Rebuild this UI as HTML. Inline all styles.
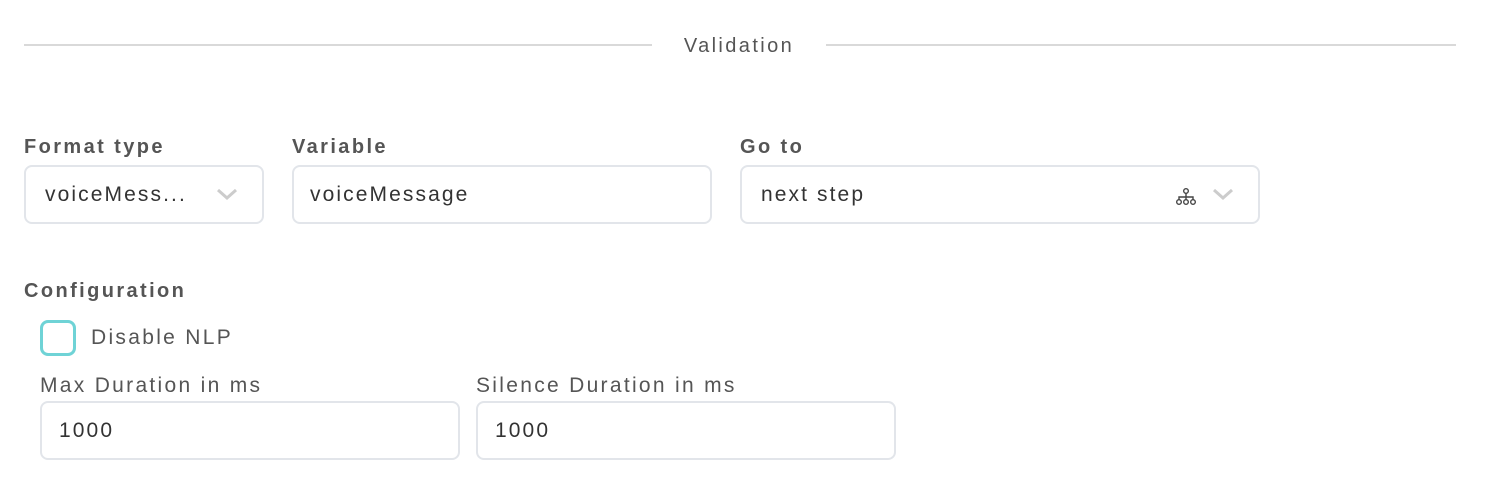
<!DOCTYPE html>
<html><head><style>
body{margin:0;width:1494px;height:502px;background:#fff;font-family:"Liberation Sans",sans-serif;position:relative;overflow:hidden}
.a{position:absolute}
.line{position:absolute;height:2px;background:#d9d9d9;top:44px}
.lbl{position:absolute;font-size:20px;font-weight:bold;color:#555;line-height:24px;letter-spacing:2.4px}
.lbl2{position:absolute;font-size:21px;color:#555;line-height:24px;letter-spacing:2.3px}
.box{position:absolute;border:2px solid #e2e5ea;border-radius:8px;box-sizing:border-box;height:59px;font-size:21px;color:#333;line-height:55px;padding-left:19px;letter-spacing:2.1px}
.chev{position:absolute;top:19px}
</style></head><body>
<div class="line" style="left:24px;width:628px"></div>
<div class="line" style="left:826px;width:630px"></div>
<div class="a" style="left:652px;width:174px;top:35px;text-align:center;font-size:20px;color:#555;letter-spacing:2.4px">Validation</div>

<div class="lbl" style="left:24px;top:135px">Format type</div>
<div class="lbl" style="left:292px;top:135px">Variable</div>
<div class="lbl" style="left:740px;top:135px">Go to</div>

<div class="box" style="left:24px;top:165px;width:240px">voiceMess...
<svg class="chev" style="left:189px" width="24" height="16" viewBox="0 0 24 16"><path d="M3 4l9 8 9-8" fill="none" stroke="#ccc" stroke-width="3"/></svg></div>
<div class="box" style="left:292px;top:165px;width:420px;padding-left:16px">voiceMessage</div>
<div class="box" style="left:740px;top:165px;width:520px">next step
<svg class="a" style="left:433px;top:20px" width="22" height="20" viewBox="0 0 22 20"><g fill="none" stroke="#444" stroke-width="1.4"><circle cx="11" cy="4" r="2.3"/><path d="M11 6.5v3.5M4 13v-3h14v3M11 10v3"/><circle cx="4" cy="15" r="2.3"/><circle cx="11" cy="15" r="2.3"/><circle cx="18" cy="15" r="2.3"/></g></svg>
<svg class="chev" style="left:469px" width="24" height="16" viewBox="0 0 24 16"><path d="M3 4l9 8 9-8" fill="none" stroke="#ccc" stroke-width="3"/></svg></div>

<div class="lbl" style="left:24px;top:279px">Configuration</div>
<div class="a" style="left:40px;top:320px;width:36px;height:36px;box-sizing:border-box;border:3px solid #6fd3d6;border-radius:8px"></div>
<div class="lbl2" style="left:91px;top:326px">Disable NLP</div>
<div class="lbl2" style="left:40px;top:374px">Max Duration in ms</div>
<div class="lbl2" style="left:476px;top:374px">Silence Duration in ms</div>
<div class="box" style="left:40px;top:401px;width:420px;padding-left:17px">1000</div>
<div class="box" style="left:476px;top:401px;width:420px;padding-left:17px">1000</div>
</body></html>
